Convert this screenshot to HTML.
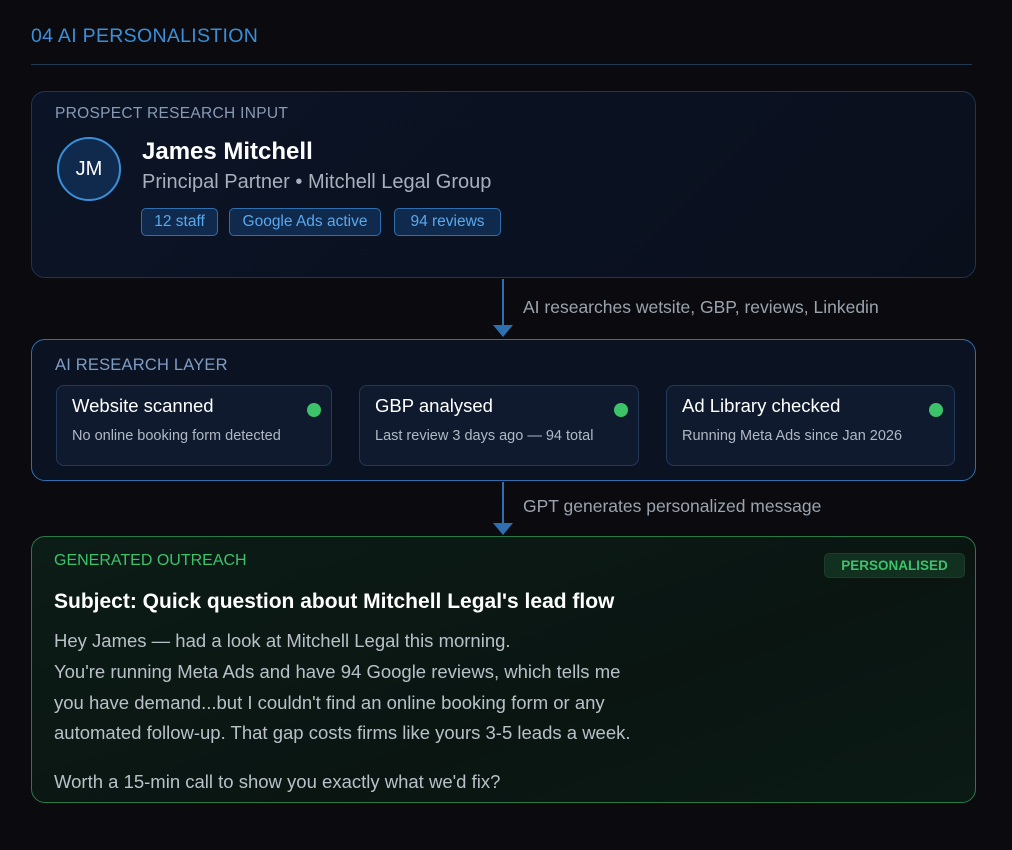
<!DOCTYPE html>
<html><head><meta charset="utf-8"><style>
*{margin:0;padding:0;box-sizing:border-box}
body{width:1012px;height:850px;background:#0b0b0f;font-family:"Liberation Sans",sans-serif;position:relative;overflow:hidden}
.a{position:absolute;white-space:nowrap;line-height:1.15}
.card{position:absolute;left:31px;width:945px;border-radius:14px}
.tag{position:absolute;top:208px;height:28px;border:1px solid #2f6fb0;background:#0f2a4d;border-radius:5px;color:#5aa8ee;font-size:15.5px;line-height:26px;text-align:center;white-space:nowrap}
.sub{position:absolute;top:385px;height:81px;border:1px solid #22395a;background:#0f1a2e;border-radius:8px}
.sub .t{position:absolute;left:15px;top:9px;color:#fff;font-size:18.5px;white-space:nowrap}
.sub .d{position:absolute;left:15px;top:42px;color:#b0b8c4;font-size:14.5px;white-space:nowrap}
.sub .g{position:absolute;top:17px;width:14px;height:14px;border-radius:50%;background:#3cc36a}
.vl{position:absolute;left:502px;width:2px;background:#2f6fb0}
.tri{position:absolute;left:493px;width:0;height:0;border-left:10px solid transparent;border-right:10px solid transparent;border-top:12px solid #2f6fb0}
.lbl{position:absolute;left:523px;color:#9aa3ae;font-size:17.5px;white-space:nowrap;line-height:1.15}
.body{position:absolute;left:54px;color:#b9c0c8;font-size:18.5px;white-space:nowrap;line-height:1.15}
</style></head><body>
<div class="a" style="left:31px;top:25px;color:#3a8fd9;font-size:19.5px;letter-spacing:0.3px">04 AI PERSONALISTION</div>
<div class="a" style="left:31px;top:64px;width:941px;height:1px;background:#1e3a55"></div>

<div class="card" style="top:91px;height:187px;border:1px solid #1f3550;background:linear-gradient(135deg,#0b1426,#0a0f1c)"></div>
<div class="a" style="left:55px;top:105px;color:#8a9ab5;font-size:15.5px;letter-spacing:0.3px">PROSPECT RESEARCH INPUT</div>
<div class="a" style="left:57px;top:137px;width:64px;height:64px;border-radius:50%;background:#0f2a4d;border:2px solid #3a8fd9;color:#fff;font-size:20px;line-height:60px;text-align:center">JM</div>
<div class="a" style="left:142px;top:138px;color:#fff;font-size:24px;font-weight:bold">James Mitchell</div>
<div class="a" style="left:142px;top:171px;color:#a8b0bc;font-size:20px">Principal Partner • Mitchell Legal Group</div>
<div class="tag" style="left:141px;width:77px">12 staff</div>
<div class="tag" style="left:229px;width:152px">Google Ads active</div>
<div class="tag" style="left:394px;width:107px">94 reviews</div>

<div class="vl" style="top:279px;height:46px"></div>
<div class="tri" style="top:325px"></div>
<div class="lbl" style="top:297px">AI researches wetsite, GBP, reviews, Linkedin</div>

<div class="card" style="top:339px;height:142px;border:1.5px solid #2f6fb0;background:#0b1222"></div>
<div class="a" style="left:55px;top:356px;color:#7f9cc4;font-size:16.5px;letter-spacing:0.2px">AI RESEARCH LAYER</div>
<div class="sub" style="left:56px;width:276px"><div class="t">Website scanned</div><div class="d">No online booking form detected</div><div class="g" style="left:250px"></div></div>
<div class="sub" style="left:359px;width:280px"><div class="t">GBP analysed</div><div class="d">Last review 3 days ago — 94 total</div><div class="g" style="left:254px"></div></div>
<div class="sub" style="left:666px;width:289px"><div class="t">Ad Library checked</div><div class="d">Running Meta Ads since Jan 2026</div><div class="g" style="left:262px"></div></div>

<div class="vl" style="top:482px;height:42px"></div>
<div class="tri" style="top:523px"></div>
<div class="lbl" style="top:496px">GPT generates personalized message</div>

<div class="card" style="top:536px;height:267px;border:1px solid #2a7a48;background:linear-gradient(160deg,#0c1c16,#0a1512 60%,#0b1a14)"></div>
<div class="a" style="left:54px;top:552px;color:#3cc36a;font-size:16px">GENERATED OUTREACH</div>
<div class="a" style="left:824px;top:553px;width:141px;height:25px;border-radius:5px;background:#12301f;border:1px solid #1d3d2a;color:#3cc36a;font-size:13.5px;font-weight:bold;line-height:23px;text-align:center">PERSONALISED</div>
<div class="a" style="left:54px;top:590px;color:#fff;font-size:21px;font-weight:bold">Subject: Quick question about Mitchell Legal's lead flow</div>
<div class="body" style="top:630px">Hey James — had a look at Mitchell Legal this morning.</div>
<div class="body" style="top:661px">You're running Meta Ads and have 94 Google reviews, which tells me</div>
<div class="body" style="top:692px">you have demand...but I couldn't find an online booking form or any</div>
<div class="body" style="top:722px">automated follow-up. That gap costs firms like yours 3-5 leads a week.</div>
<div class="body" style="top:771px">Worth a 15-min call to show you exactly what we'd fix?</div>
</body></html>
